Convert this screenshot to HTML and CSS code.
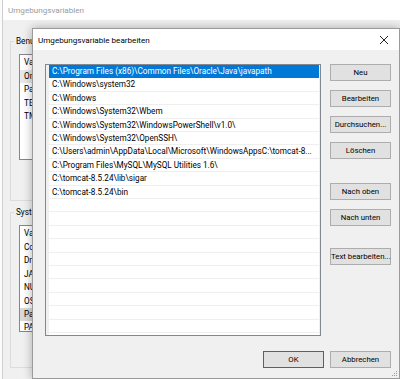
FILE: index.html
```html
<!DOCTYPE html>
<html lang="de">
<head>
  <meta charset="UTF-8" />
  <title>Umgebungsvariable bearbeiten</title>
  <link rel="stylesheet" href="styles.css">
</head>
<body>
  <div class="desktop">

    <div class="back-window">
      <div class="back-title">Umgebungsvariablen</div>
      <div class="back-content">
        <fieldset class="group user-group">
          <legend>Benutzervariablen für admin</legend>
          <div class="plist user-list">
            <div class="plist-head">Variable</div>
            <div class="plist-row hover">OneDrive</div>
            <div class="plist-row">Path</div>
            <div class="plist-row">TEMP</div>
            <div class="plist-row">TMP</div>
          </div>
        </fieldset>
        <fieldset class="group system-group">
          <legend>Systemvariablen</legend>
          <div class="plist system-list">
            <div class="plist-head">Variable</div>
            <div class="plist-row">ComSpec</div>
            <div class="plist-row">DriverData</div>
            <div class="plist-row">JAVA_HOME</div>
            <div class="plist-row">NUMBER_OF_PROCESSORS</div>
            <div class="plist-row">OS</div>
            <div class="plist-row picked">Path</div>
            <div class="plist-row">PATHEXT</div>
          </div>
        </fieldset>
      </div>
    </div>

    <div class="dialog">
      <div class="dialog-title">
        <span>Umgebungsvariable bearbeiten</span>
        <svg class="close" width="10" height="10" viewBox="0 0 10 10">
          <path d="M1 1 L9 9 M9 1 L1 9" stroke="#222" stroke-width="1" fill="none"/>
        </svg>
      </div>
      <div class="dialog-body">
        <div class="main">
          <div class="path-list">
            <div class="path-row selected">C:\Program Files (x86)\Common Files\Oracle\Java\javapath</div>
            <div class="path-row">C:\Windows\system32</div>
            <div class="path-row">C:\Windows</div>
            <div class="path-row">C:\Windows\System32\Wbem</div>
            <div class="path-row">C:\Windows\System32\WindowsPowerShell\v1.0\</div>
            <div class="path-row">C:\Windows\System32\OpenSSH\</div>
            <div class="path-row">C:\Users\admin\AppData\Local\Microsoft\WindowsAppsC:\tomcat-8...</div>
            <div class="path-row">C:\Program Files\MySQL\MySQL Utilities 1.6\</div>
            <div class="path-row">C:\tomcat-8.5.24\lib\sigar</div>
            <div class="path-row">C:\tomcat-8.5.24\bin</div>
          </div>
          <div class="side">
            <button class="btn">Neu</button>
            <button class="btn">Bearbeiten</button>
            <button class="btn">Durchsuchen...</button>
            <button class="btn">Löschen</button>
            <button class="btn move-first">Nach oben</button>
            <button class="btn">Nach unten</button>
            <button class="btn text-edit">Text bearbeiten...</button>
          </div>
        </div>
        <div class="footer">
          <button class="btn ok">OK</button>
          <button class="btn">Abbrechen</button>
        </div>
      </div>
      <svg class="grip" width="7" height="7" viewBox="0 0 7 7">
        <rect x="5" y="1" width="1" height="1" fill="#999"/>
        <rect x="3" y="3" width="1" height="1" fill="#999"/>
        <rect x="5" y="3" width="1" height="1" fill="#999"/>
        <rect x="1" y="5" width="1" height="1" fill="#999"/>
        <rect x="3" y="5" width="1" height="1" fill="#999"/>
        <rect x="5" y="5" width="1" height="1" fill="#999"/>
      </svg>
    </div>

  </div>
</body>
</html>
```

FILE: styles.css
```css
* {
  box-sizing: border-box;
}

body {
  margin: 0;
  font-family: Roboto, "Liberation Sans", sans-serif;
  font-size: 8.2px;
  color: #000;
  background: #fbfbfb;
}

.desktop {
  position: relative;
  width: 400px;
  height: 379px;
  overflow: hidden;
}

/* window behind */
.back-window {
  position: absolute;
  left: 2px;
  top: 0;
  width: 430px;
  height: 379px;
  background: #f0f0f0;
  border-left: 1px solid #cfcfcf;
}

.back-title {
  height: 20px;
  line-height: 20px;
  padding-left: 5px;
  background: #fff;
  color: #9a9a9a;
  font-size: 8.1px;
}

.back-content {
  padding: 15px 0 0 7px;
}

.group {
  margin: 0;
  width: 400px;
  padding: 7px 0 0 8px;
  border: 1px solid #dcdcdc;
}

.group legend {
  margin-left: -5px;
  padding: 0 2px;
  line-height: 12px;
}

.user-group {
  height: 166px;
}

.system-group {
  margin-top: 5px;
  height: 162px;
}

.plist {
  background: #fff;
  border: 1px solid #828790;
  overflow: hidden;
}

.user-list {
  height: 106px;
}

.system-list {
  height: 107px;
}

.plist-head {
  height: 15px;
  line-height: 15px;
  padding-left: 4px;
}

.plist-row {
  height: 13.4px;
  line-height: 13.4px;
  padding-left: 4px;
  white-space: nowrap;
}

.plist-row.hover {
  background: #e8e8e8;
}

.plist-row.picked {
  background: #d9d9d9;
}

/* active dialog */
.dialog {
  position: absolute;
  left: 32px;
  top: 28px;
  width: 368px;
  height: 351px;
  display: flex;
  flex-direction: column;
  background: #f0f0f0;
  border: 1px solid #9a9a9a;
  box-shadow: 0 0 9px rgba(0, 0, 0, 0.3);
}

.dialog-title {
  height: 21px;
  display: flex;
  align-items: center;
  justify-content: space-between;
  padding: 0 10px 0 5px;
  background: #fff;
  font-size: 8.1px;
}

.dialog-body {
  flex: 1;
  display: flex;
  flex-direction: column;
  padding: 14px 8px 10px 12px;
}

.main {
  display: flex;
  gap: 9px;
}

.path-list {
  width: 276px;
  height: 272px;
  padding: 0 1px 0 3px;
  border: 1px solid #828790;
  background: repeating-linear-gradient(to bottom, #fff 0, #fff 12.4px, #efefef 12.4px, #efefef 13.4px);
  background-clip: content-box;
  overflow: hidden;
}

.path-row {
  height: 13.4px;
  line-height: 13.4px;
  padding-left: 3px;
  white-space: nowrap;
  overflow: hidden;
}

.path-row.selected {
  background: #0078d7;
  color: #fff;
}

.side {
  width: 61px;
  display: flex;
  flex-direction: column;
  gap: 9px;
}

.btn {
  height: 17px;
  padding: 0;
  font-family: inherit;
  font-size: 7.8px;
  color: #000;
  background: #e1e1e1;
  border: 1px solid #adadad;
  white-space: nowrap;
  overflow: visible;
}

.side .btn {
  width: 61px;
}

.move-first {
  margin-top: 15px;
}

.text-edit {
  margin-top: 13px;
}

.footer {
  margin-top: auto;
  display: flex;
  justify-content: flex-end;
  gap: 6px;
}

.footer .btn {
  width: 61px;
}

.btn.ok {
  border-color: #0078d7;
}

.grip {
  position: absolute;
  right: 1px;
  bottom: 1px;
}
```
